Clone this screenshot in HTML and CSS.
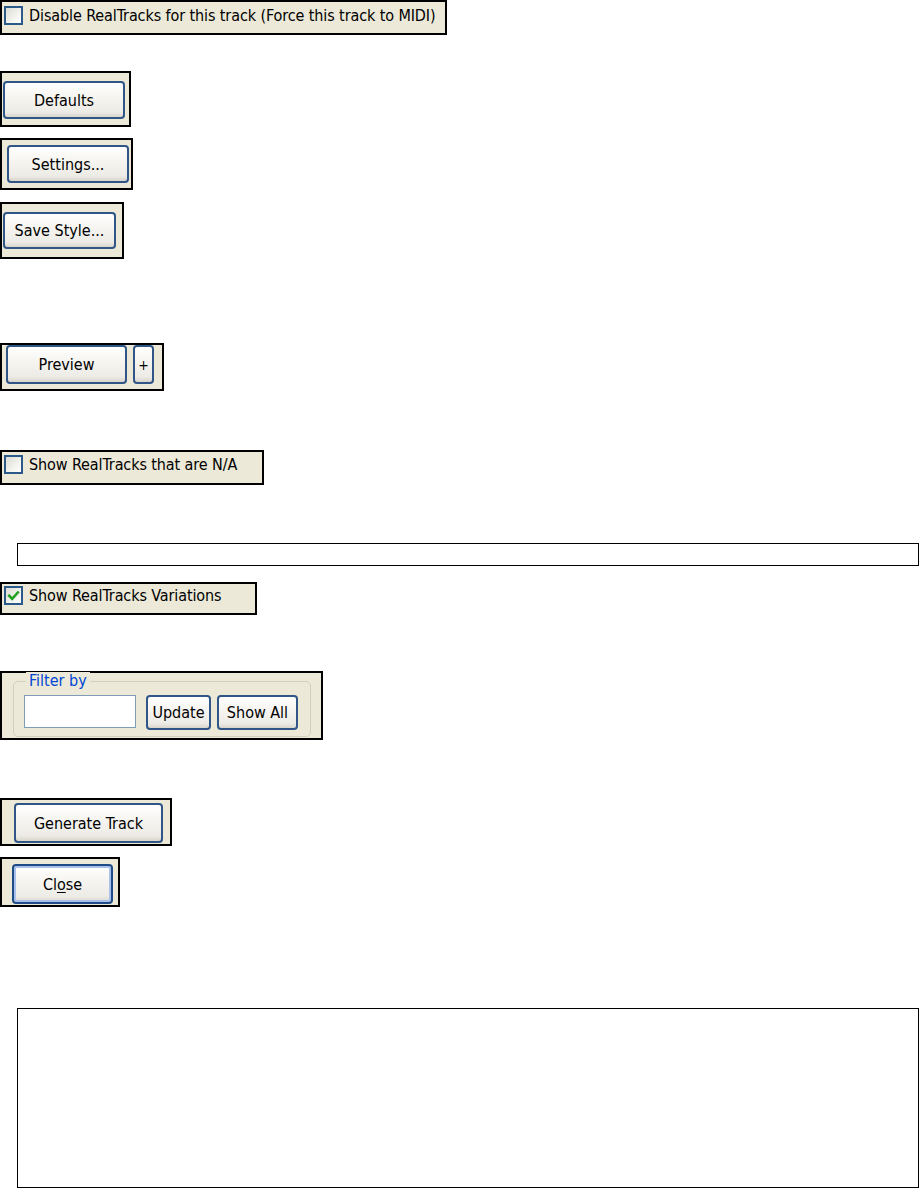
FILE: index.html
```html
<!DOCTYPE html>
<html>
<head>
<meta charset="utf-8">
<link rel="stylesheet" href="styles.css">
</head>
<body>
<div class="page">
  <div class="panel p-disable">
    <span class="cb"></span><span class="lbl">Disable RealTracks for this track (Force this track to MIDI)</span>
  </div>

  <div class="panel p-defaults"><button class="btn b-defaults">Defaults</button></div>
  <div class="panel p-settings"><button class="btn b-settings">Settings...</button></div>
  <div class="panel p-save"><button class="btn b-save">Save Style...</button></div>

  <div class="panel p-preview">
    <button class="btn b-preview">Preview</button>
    <button class="btn b-plus">+</button>
  </div>

  <div class="panel p-na">
    <span class="cb"></span><span class="lbl">Show RealTracks that are N/A</span>
  </div>

  <div class="box line-box"></div>

  <div class="panel p-var">
    <span class="cb checked"><svg viewBox="0 0 12 12" width="13" height="13"><path d="M2 6.2 L4.8 9 L10 3.2" fill="none" stroke="#21a121" stroke-width="2.4" stroke-linecap="square"/></svg></span><span class="lbl">Show RealTracks Variations</span>
  </div>

  <div class="panel p-filter">
    <div class="group">
      <span class="legend">Filter by</span>
      <span class="field"></span>
      <button class="btn b-update">Update</button>
      <button class="btn b-showall">Show All</button>
    </div>
  </div>

  <div class="panel p-gen"><button class="btn b-gen">Generate Track</button></div>
  <div class="panel p-close"><button class="btn b-close">Cl<u>o</u>se</button></div>

  <div class="box big-box"></div>
</div>
</body>
</html>
```

FILE: styles.css
```css
html, body {
  margin: 0;
  padding: 0;
  background: #ffffff;
}

.page {
  display: flex;
  flex-direction: column;
  align-items: flex-start;
  font-family: "DejaVu Sans Condensed", "Liberation Sans", sans-serif;
  font-size: 16px;
  color: #000;
}

.panel {
  box-sizing: border-box;
  background: #ece9d8;
  border: 2px solid #000;
  display: flex;
  align-items: flex-start;
}

.cb {
  box-sizing: border-box;
  width: 19px;
  height: 19px;
  border: 2px solid #2b5a8a;
  background: linear-gradient(135deg, #dcdcd5 0%, #f3f3ef 60%, #ffffff 100%);
  display: inline-flex;
  align-items: center;
  justify-content: center;
  flex: none;
}

.lbl {
  margin-left: 6px;
  line-height: 19px;
  white-space: nowrap;
  letter-spacing: -0.1px;
}

.btn {
  box-sizing: border-box;
  font-family: inherit;
  font-size: 16px;
  color: #000;
  padding: 0;
  border: 2px solid #2f5687;
  border-radius: 4px;
  background: linear-gradient(to bottom, #ffffff 0%, #f6f5f1 40%, #ecebe6 85%, #d9d5cb 100%);
  display: flex;
  align-items: center;
  justify-content: center;
  white-space: nowrap;
}

/* Disable panel */
.p-disable {
  width: 447px;
  height: 35px;
  padding: 4px 0 0 2px;
}

/* Defaults */
.p-defaults {
  margin-top: 36px;
  width: 131px;
  height: 56px;
  padding: 8px 0 0 1px;
}
.b-defaults { width: 122px; height: 38px; }

/* Settings */
.p-settings {
  margin-top: 11px;
  width: 133px;
  height: 52px;
  padding: 5px 0 0 5px;
}
.b-settings { width: 122px; height: 38px; }

/* Save Style */
.p-save {
  margin-top: 12px;
  width: 124px;
  height: 57px;
  padding: 8px 0 0 1px;
}
.b-save { width: 113px; height: 37px; }

/* Preview */
.p-preview {
  margin-top: 84px;
  width: 164px;
  height: 48px;
  padding: 0 0 0 4px;
}
.b-preview { width: 121px; height: 39px; }
.b-plus { width: 21px; height: 39px; margin-left: 6px; font-size: 14px; }

/* N/A */
.p-na {
  margin-top: 59px;
  width: 264px;
  height: 35px;
  padding: 3px 0 0 2px;
}

.box {
  box-sizing: border-box;
  background: #fff;
  border: 1px solid #000;
  margin-left: 17px;
}
.line-box {
  margin-top: 58px;
  width: 902px;
  height: 23px;
}

/* Variations */
.p-var {
  margin-top: 16px;
  width: 257px;
  height: 33px;
  padding: 2px 0 0 2px;
}

/* Filter */
.p-filter {
  margin-top: 56px;
  width: 323px;
  height: 69px;
  padding: 8px 0 0 11px;
}
.group {
  box-sizing: border-box;
  position: relative;
  width: 298px;
  height: 56px;
  border: 1px solid #d0d0bf;
  border-radius: 5px;
  display: flex;
  align-items: flex-start;
  padding: 13px 0 0 10px;
}
.legend {
  position: absolute;
  left: 12px;
  top: -10px;
  padding: 0 3px;
  background: #ece9d8;
  color: #0046d5;
  font-size: 16px;
  line-height: 17px;
}
.field {
  box-sizing: border-box;
  width: 112px;
  height: 33px;
  background: #fff;
  border: 1px solid #7f9db9;
  flex: none;
}
.b-update { width: 65px; height: 35px; margin-left: 10px; }
.b-showall { width: 81px; height: 35px; margin-left: 6px; }

/* Generate */
.p-gen {
  margin-top: 58px;
  width: 172px;
  height: 48px;
  padding: 3px 0 0 12px;
}
.b-gen { width: 149px; height: 40px; }

/* Close */
.p-close {
  margin-top: 11px;
  width: 120px;
  height: 50px;
  padding: 5px 0 0 10px;
}
.b-close {
  width: 101px;
  height: 40px;
  border-color: #1f4c86;
  box-shadow: inset 0 0 0 2px #a9c0ea;
}
.b-close u { text-underline-offset: 2px; }

.big-box {
  margin-top: 101px;
  width: 902px;
  height: 180px;
}
```
